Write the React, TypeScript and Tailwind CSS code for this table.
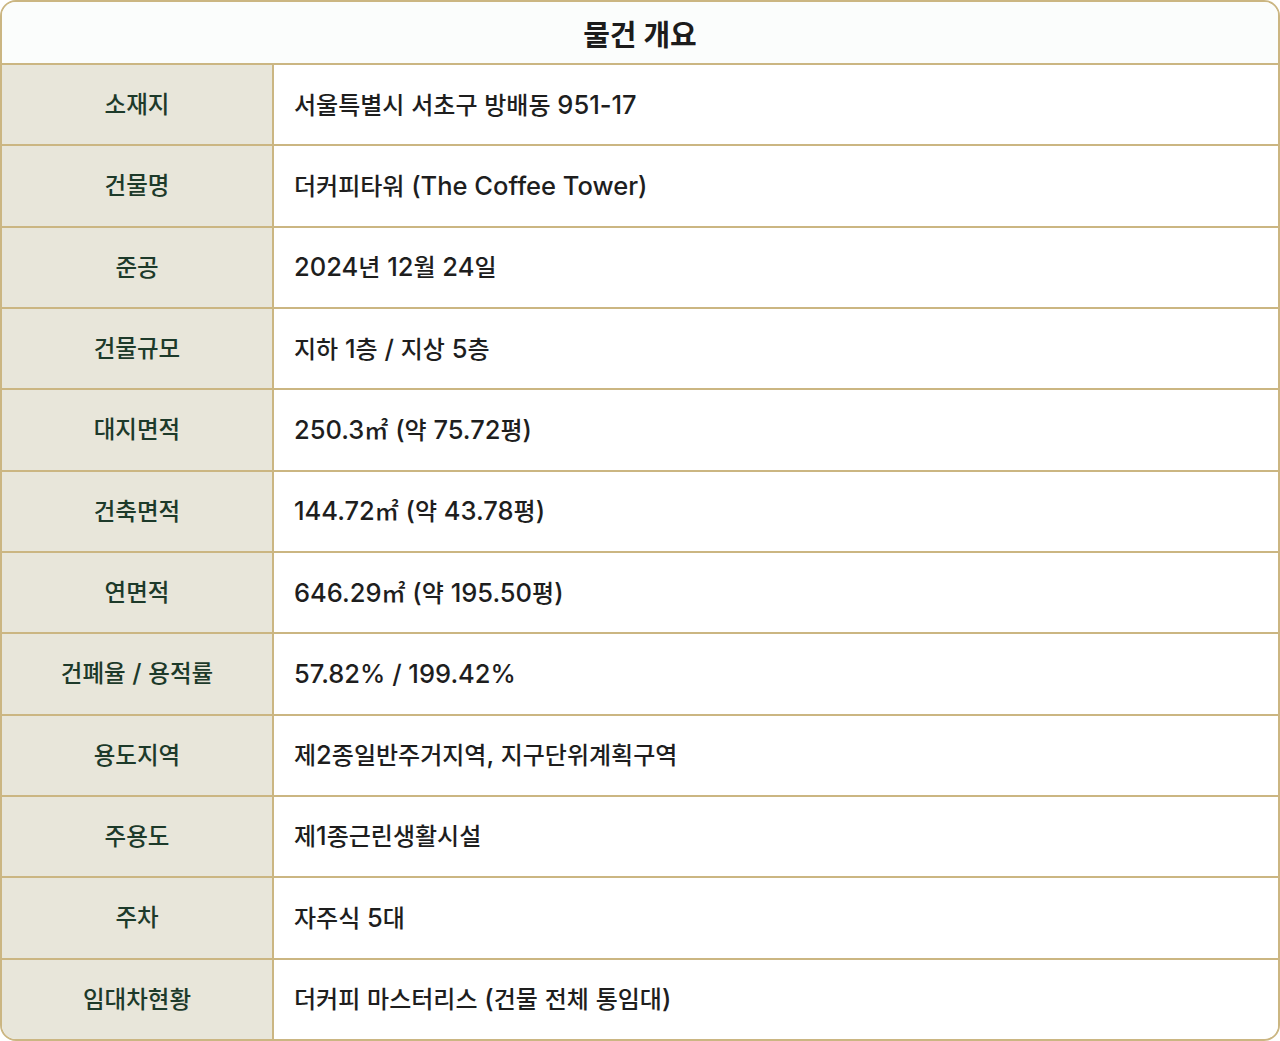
import React from "react";

const rows: [string, string][] = [
  ["소재지", "서울특별시 서초구 방배동 951-17"],
  ["건물명", "더커피타워 (The Coffee Tower)"],
  ["준공", "2024년 12월 24일"],
  ["건물규모", "지하 1층 / 지상 5층"],
  ["대지면적", "250.3㎡ (약 75.72평)"],
  ["건축면적", "144.72㎡ (약 43.78평)"],
  ["연면적", "646.29㎡ (약 195.50평)"],
  ["건폐율 / 용적률", "57.82% / 199.42%"],
  ["용도지역", "제2종일반주거지역, 지구단위계획구역"],
  ["주용도", "제1종근린생활시설"],
  ["주차", "자주식 5대"],
  ["임대차현황", "더커피 마스터리스 (건물 전체 통임대)"],
];

function Mixed({ text, big, small }: { text: string; big: string; small: string }) {
  const parts = text.split(/([\uAC00-\uD7A3\u3131-\u318E㎡]+)/);
  return (
    <span className="whitespace-pre">
      {parts.map((p, i) =>
        p === "" ? null : /[\uAC00-\uD7A3\u3131-\u318E㎡]/.test(p) ? (
          <span key={i} className={small}>
            {p}
          </span>
        ) : (
          <span key={i} className={big}>
            {p}
          </span>
        )
      )}
    </span>
  );
}

export default function App() {
  return (
    <div
      className="w-[1280px] h-[1041px] bg-white"
      style={{ fontFamily: "Inter, 'Noto Sans CJK KR', sans-serif" }}
    >
      <div className="w-full h-full flex flex-col border-2 border-[#cbb682] rounded-[16px] overflow-hidden">
        <div className="h-[61px] shrink-0 flex items-center justify-center pt-[7px] bg-[#fbfdfc] text-[#1c1c1c] font-bold">
          <Mixed text="물건 개요" big="text-[29px]" small="text-[29px]" />
        </div>
        {rows.map(([k, v]) => (
          <div key={k} className="flex-1 flex border-t-2 border-[#cbb682]">
            <div className="w-[270px] shrink-0 flex items-center justify-center bg-[#e8e6da] text-[#1d3a2a] font-medium">
              <Mixed text={k} big="text-[25px]" small="text-[23.5px]" />
            </div>
            <div className="flex-1 flex items-center pl-[20px] border-l-2 border-[#cbb682] bg-white text-[#1e1e1e] font-medium">
              <Mixed text={v} big="text-[25.5px]" small="text-[24px]" />
            </div>
          </div>
        ))}
      </div>
    </div>
  );
}
